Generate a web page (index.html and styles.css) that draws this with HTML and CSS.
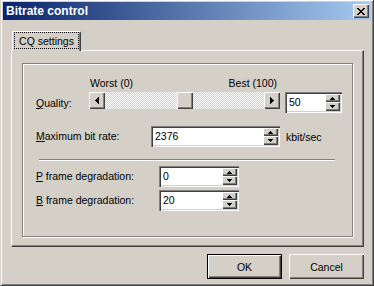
FILE: index.html
```html
<!DOCTYPE html>
<html lang="en">
<head>
    <meta charset="UTF-8">
    <title>Bitrate control</title>
    <link rel="stylesheet" href="styles.css">
</head>
<body>
    <div class="window">
        <div class="titlebar">
            <span class="title">Bitrate control</span>
            <button class="close" title="Close">
                <svg width="8" height="7" viewBox="0 0 8 7"><path d="M0 0h2v1h-2z M6 0h2v1h-2z M1 1h2v1h-2z M5 1h2v1h-2z M2 2h4v1h-4z M3 3h2v1h-2z M2 4h4v1h-4z M1 5h2v1h-2z M5 5h2v1h-2z M0 6h2v1h-2z M6 6h2v1h-2z" fill="#000"/></svg>
            </button>
        </div>

        <div class="client">
            <!-- Abas -->
            <div class="tabs">
                <div class="tab active"><span class="focus">CQ settings</span></div>
            </div>

            <div class="panel">
                <div class="group">
                    <!-- Qualidade -->
                    <div class="row-quality">
                        <label class="lbl lbl-quality"><u>Q</u>uality:</label>
                        <div class="slider-col">
                            <div class="scale">
                                <span>Worst (0)</span>
                                <span>Best (100)</span>
                            </div>
                            <div class="scrollbar">
                                <span class="sb-btn">
                                    <svg width="4" height="7" viewBox="0 0 4 7"><path d="M3 0h1v7h-1z M2 1h1v5h-1z M1 2h1v3h-1z M0 3h1v1h-1z" fill="#000"/></svg>
                                </span>
                                <div class="track">
                                    <span class="thumb" style="--pos: 0.5"></span>
                                </div>
                                <span class="sb-btn">
                                    <svg width="4" height="7" viewBox="0 0 4 7"><path d="M0 0h1v7h-1z M1 1h1v5h-1z M2 2h1v3h-1z M3 3h1v1h-1z" fill="#000"/></svg>
                                </span>
                            </div>
                        </div>
                        <div class="edit spin-quality">
                            <span class="val">50</span>
                            <span class="spin-btns">
                                <span class="spin-up"><svg width="5" height="3" viewBox="0 0 5 3"><path d="M2 0h1v1h-1z M1 1h3v1h-3z M0 2h5v1h-5z" fill="#000"/></svg></span>
                                <span class="spin-down"><svg width="5" height="3" viewBox="0 0 5 3"><path d="M0 0h5v1h-5z M1 1h3v1h-3z M2 2h1v1h-1z" fill="#000"/></svg></span>
                            </span>
                        </div>
                    </div>

                    <!-- Taxa maxima -->
                    <div class="row row-rate">
                        <label class="lbl lbl-rate"><u>M</u>aximum bit rate:</label>
                        <div class="edit edit-rate">
                            <span class="val">2376</span>
                            <span class="spin-btns">
                                <span class="spin-up"><svg width="5" height="3" viewBox="0 0 5 3"><path d="M2 0h1v1h-1z M1 1h3v1h-3z M0 2h5v1h-5z" fill="#000"/></svg></span>
                                <span class="spin-down"><svg width="5" height="3" viewBox="0 0 5 3"><path d="M0 0h5v1h-5z M1 1h3v1h-3z M2 2h1v1h-1z" fill="#000"/></svg></span>
                            </span>
                        </div>
                        <span class="unit">kbit/sec</span>
                    </div>

                    <div class="separator"></div>

                    <!-- Degradacao -->
                    <div class="row row-p">
                        <label class="lbl lbl-frame"><u>P</u> frame degradation:</label>
                        <div class="edit edit-frame">
                            <span class="val">0</span>
                            <span class="spin-btns">
                                <span class="spin-up"><svg width="5" height="3" viewBox="0 0 5 3"><path d="M2 0h1v1h-1z M1 1h3v1h-3z M0 2h5v1h-5z" fill="#000"/></svg></span>
                                <span class="spin-down"><svg width="5" height="3" viewBox="0 0 5 3"><path d="M0 0h5v1h-5z M1 1h3v1h-3z M2 2h1v1h-1z" fill="#000"/></svg></span>
                            </span>
                        </div>
                    </div>
                    <div class="row row-b">
                        <label class="lbl lbl-frame"><u>B</u> frame degradation:</label>
                        <div class="edit edit-frame">
                            <span class="val">20</span>
                            <span class="spin-btns">
                                <span class="spin-up"><svg width="5" height="3" viewBox="0 0 5 3"><path d="M2 0h1v1h-1z M1 1h3v1h-3z M0 2h5v1h-5z" fill="#000"/></svg></span>
                                <span class="spin-down"><svg width="5" height="3" viewBox="0 0 5 3"><path d="M0 0h5v1h-5z M1 1h3v1h-3z M2 2h1v1h-1z" fill="#000"/></svg></span>
                            </span>
                        </div>
                    </div>
                </div>
            </div>

            <div class="actions">
                <button class="btn btn-default">OK</button>
                <button class="btn">Cancel</button>
            </div>
        </div>
    </div>
</body>
</html>
```

FILE: styles.css
```css
* {
    box-sizing: border-box;
}

body {
    margin: 0;
    font-family: "Liberation Sans", Arial, sans-serif;
    font-size: 10.5px;
    color: #000;
    background: #d4d0c8;
}

.window {
    width: 374px;
    height: 286px;
    background: #d4d0c8;
    border: 1px solid;
    border-color: #d4d0c8 #404040 #404040 #d4d0c8;
    border-top: none;
    box-shadow: inset 1px 1px #fff, inset -1px -1px #808080;
    padding: 2px;
    display: flex;
    flex-direction: column;
}

.titlebar {
    height: 18px;
    display: flex;
    align-items: center;
    justify-content: space-between;
    background: linear-gradient(to right, #0a246a, #a6caf0);
    color: #fff;
    font-weight: bold;
    font-size: 12px;
    padding: 0 2px 0 3px;
}

.close {
    width: 16px;
    height: 14px;
    padding: 0;
    border: none;
    background: #d4d0c8;
    box-shadow: inset 1px 1px #fff, inset -1px -1px #404040, inset -2px -2px #808080;
    display: flex;
    align-items: center;
    justify-content: center;
}

.client {
    flex: 1;
    padding: 11px 7px 0 8px;
    display: flex;
    flex-direction: column;
}

.tabs {
    display: flex;
    padding-left: 1px;
    position: relative;
    z-index: 1;
}

.tab {
    width: 69px;
    height: 20px;
    margin-bottom: -1px;
    background: #d4d0c8;
    border-top: 1px solid #fff;
    border-left: 1px solid #fff;
    border-right: 1px solid #404040;
    border-radius: 2px 2px 0 0;
    box-shadow: inset -1px 0 #808080;
    padding: 0 1px;
}

.focus {
    display: flex;
    align-items: center;
    justify-content: center;
    height: 17px;
    border: 1px dotted #000;
}

.panel {
    height: 197px;
    background: #d4d0c8;
    border: 1px solid;
    border-color: #fff #404040 #404040 #fff;
    box-shadow: inset -1px -1px #808080;
    padding: 12px 10px 0;
}

.group {
    height: 174px;
    border: 1px solid #808080;
    box-shadow: inset 1px 1px #fff, 1px 1px #fff;
    padding: 13px 0 0 13px;
}

.lbl {
    line-height: 13px;
}

u {
    text-decoration-thickness: 1px;
    text-underline-offset: 1px;
}

.row-quality {
    display: flex;
}

.lbl-quality {
    width: 53px;
    margin-top: 20px;
}

.slider-col {
    width: 191px;
    display: flex;
    flex-direction: column;
    gap: 2px;
}

.scale {
    display: flex;
    justify-content: space-between;
    line-height: 13px;
    padding: 0 3px 0 1px;
}

.scrollbar {
    height: 17px;
    display: flex;
}

.sb-btn, .thumb, .spin-up, .spin-down {
    background: #d4d0c8;
    box-shadow: inset 1px 1px #fff, inset -1px -1px #404040, inset -2px -2px #808080;
}

.sb-btn {
    width: 16px;
    display: flex;
    align-items: center;
    justify-content: center;
}

.track {
    flex: 1;
    position: relative;
    background: repeating-conic-gradient(#fff 0 25%, #d4d0c8 0 50%) 0 0 / 2px 2px;
}

.thumb {
    position: absolute;
    top: 0;
    width: 16px;
    height: 100%;
    left: calc(var(--pos) * (100% - 16px));
}

.edit {
    display: flex;
    height: 21px;
    background: #fff;
    box-shadow: inset 1px 1px #808080, inset 2px 2px #404040, inset -1px -1px #fff, inset -2px -2px #d4d0c8;
    padding: 2px;
}

.val {
    flex: 1;
    padding-left: 2px;
    line-height: 17px;
}

.spin-btns {
    width: 15px;
    display: flex;
    flex-direction: column;
}

.spin-up {
    height: 8px;
    display: flex;
    align-items: center;
    justify-content: center;
}

.spin-down {
    flex: 1;
    display: flex;
    align-items: center;
    justify-content: center;
}

.spin-quality {
    width: 57px;
    margin-left: 5px;
    margin-top: 15px;
}

.row {
    display: flex;
    align-items: center;
}

.row-rate {
    margin-top: 13px;
}

.lbl-rate {
    width: 115px;
}

.edit-rate {
    width: 129px;
}

.unit {
    margin-left: 6px;
}

.separator {
    width: 296px;
    height: 2px;
    margin: 12px 0 0 3px;
    border-top: 1px solid #808080;
    border-bottom: 1px solid #fff;
}

.row-p {
    margin-top: 5px;
}

.row-b {
    margin-top: 3px;
}

.lbl-frame {
    width: 123px;
}

.edit-frame {
    width: 80px;
}

.actions {
    display: flex;
    justify-content: flex-end;
    gap: 7px;
    margin-top: 7px;
}

.btn {
    width: 75px;
    height: 25px;
    padding: 0;
    border: none;
    background: #d4d0c8;
    font-family: inherit;
    font-size: inherit;
    color: #000;
    box-shadow: inset 1px 1px #fff, inset -1px -1px #404040, inset -2px -2px #808080;
}

.btn-default {
    border: 1px solid #000;
    box-shadow: inset 1px 1px #fff, inset -1px -1px #404040, inset -2px -2px #808080;
}
```
